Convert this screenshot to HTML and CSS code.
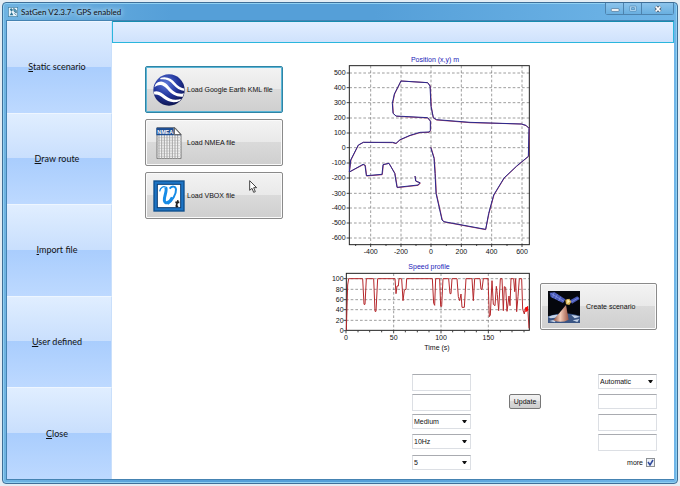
FILE: index.html
```html
<!DOCTYPE html>
<html lang="en">
<head>
<meta charset="utf-8">
<title>SatGen V2.3.7- GPS enabled</title>
<link rel="stylesheet" href="styles.css">
</head>
<body>
<div class="window">
  <header class="titlebar">
    <svg class="app-icon" viewBox="0 0 30 30" aria-hidden="true">
      <rect x="1" y="1" width="28" height="28" fill="#e9f4fb" stroke="#3e7fa3" stroke-width="2"/>
      <path d="M5 6l6-2 4 5-5 5zM11 15l-6 10h11z" fill="#2f7494"/>
      <path d="M17 4l8 6v8l-7-5zM19 19l7 6" fill="#5fa7c4" stroke="#245f80" stroke-width="2"/>
    </svg>
    <h1 class="title">SatGen V2.3.7- GPS enabled</h1>
    <div class="window-controls">
      <button type="button" class="control" aria-label="Minimize"><svg viewBox="0 0 30 30"><rect x="4" y="14" width="23" height="8" rx="2" fill="#fff" stroke="#4b6c8b" stroke-width="2"/></svg></button>
      <button type="button" class="control" aria-label="Maximize"><svg viewBox="0 0 30 30"><rect x="5" y="6" width="20" height="16" rx="2" fill="#b5daf4" stroke="#4d87b3" stroke-width="2"/><rect x="11" y="11" width="8" height="6" fill="#78b8e4" stroke="#4d87b3" stroke-width="2"/></svg></button>
      <button type="button" class="control control-close" aria-label="Close window"><svg viewBox="0 0 30 30"><path d="M8 8l14 14M22 8L8 22" stroke="#46586c" stroke-width="10"/><path d="M8 8l14 14M22 8L8 22" stroke="#fff" stroke-width="5"/></svg></button>
    </div>
  </header>
  <div class="body">
    <nav class="sidebar">
      <button type="button" class="nav-item"><u>S</u>tatic scenario</button>
      <button type="button" class="nav-item"><u>D</u>raw route</button>
      <button type="button" class="nav-item"><u>I</u>mport file</button>
      <button type="button" class="nav-item"><u>U</u>ser defined</button>
      <button type="button" class="nav-item"><u>C</u>lose</button>
    </nav>
    <main class="content">
      <div class="band"></div>
      <div class="workspace">
        <div class="imports">
          <button type="button" class="action action-focused">
            <svg class="action-icon" viewBox="0 0 96 96" aria-hidden="true">
              <defs>
                <radialGradient id="globe" cx="40%" cy="30%" r="75%"><stop offset="0" stop-color="#5d78d8"/><stop offset=".5" stop-color="#2539a0"/><stop offset="1" stop-color="#0a1048"/></radialGradient>
                <clipPath id="disc"><circle cx="48" cy="48" r="46"/></clipPath>
              </defs>
              <circle cx="48" cy="48" r="47" fill="url(#globe)"/>
              <g clip-path="url(#disc)" fill="#fff">
                <path d="M22 12C40 6 56 14 66 26C74 36 84 42 96 44L95 51C80 49 70 42 61 32C50 19 38 14 22 16Z"/>
                <path d="M8 30C24 16 36 24 48 38C60 53 74 62 94 58L90 68C72 70 56 62 43 46C31 32 20 28 4 40Z"/>
                <path d="M0 54C16 48 26 56 38 66C52 77 66 80 86 74L80 81C62 88 44 84 31 73C22 65 14 60 2 62Z"/>
              </g>
            </svg>
            <span>Load Google Earth KML file</span>
          </button>
          <button type="button" class="action">
            <svg class="action-icon" viewBox="0 0 96 96" aria-hidden="true">
              <path d="M12 2H66L84 22V95H12Z" fill="#f3f3f3" stroke="#777" stroke-width="3"/>
              <path d="M14 32H83M14 40H83M14 48H83M14 56H83M14 64H83M14 72H83M14 80H83M14 88H83" stroke="#d2d2d2" stroke-width="3"/>
              <path d="M18 24V95M26 24V95M34 24V95M42 24V95M50 24V95M58 24V95M66 24V95M74 24V95" stroke="#a5a5a5" stroke-width="3"/>
              <path d="M10 2H62V22H84V25H10Z" fill="#1d4d92"/>
              <path d="M64 2L84 23H64Z" fill="#fff" stroke="#555" stroke-width="3"/>
              <text x="13" y="20" class="nmea-mark">NMEA</text>
            </svg>
            <span>Load NMEA file</span>
          </button>
          <button type="button" class="action">
            <svg class="action-icon" viewBox="0 0 96 96" aria-hidden="true">
              <rect x="1" y="1" width="94" height="94" fill="#0d4e8d"/>
              <rect x="5" y="5" width="86" height="86" fill="#1d74c4"/>
              <rect x="13" y="13" width="70" height="70" fill="#fff" stroke="#0c3f75" stroke-width="3"/>
              <path d="M20 34C22 22 32 17 38 22" fill="none" stroke="#168be6" stroke-width="4"/>
              <path d="M38 22C44 32 32 50 34 62C37 74 50 68 58 52" fill="none" stroke="#168be6" stroke-width="9"/>
              <path d="M50 26C56 17 68 18 69 28C70 42 58 62 44 72" fill="none" stroke="#168be6" stroke-width="6"/>
              <path d="M75 61L70 77Q69 82 75 78M67 67H79" fill="none" stroke="#222" stroke-width="5"/>
            </svg>
            <span>Load VBOX file</span>
            <svg class="pointer" viewBox="0 0 24 39" aria-hidden="true"><path d="M2 2V31L9 25L14 37L19 35L14 23H23Z" fill="#fff" stroke="#444" stroke-width="3"/></svg>
          </button>
        </div>
        <svg class="chart" viewBox="0 0 645 630" role="img" aria-label="Position (x,y) m">
          <text x="345" y="36" class="chart-title">Position (x,y) m</text>
          <path class="grid" d="M88 69H629M88 113H629M88 158H629M88 204H629M88 249H629M88 293H629M88 339H629M88 384H629M88 430H629M88 474H629M88 519H629M88 564H629M152 47V583M243 47V583M333 47V583M424 47V583M515 47V583M606 47V583"/>
          <path class="tick" d="M80 69h8M80 113h8M80 158h8M80 204h8M80 249h8M80 293h8M80 339h8M80 384h8M80 430h8M80 474h8M80 519h8M80 564h8M152 583v8M243 583v8M333 583v8M424 583v8M515 583v8M606 583v8M107 583v5M198 583v5M288 583v5M379 583v5M470 583v5M561 583v5"/>
          <rect class="frame" x="88" y="47" width="540" height="537"/>
          <path class="track-shadow" d="M333 292L343 325L346 370L349 430L367 510L373 516L497 539L507 490L522 435L553 384L590 349L626 319L628 235L618 227L604 222L450 218L350 210L340 204L334 170L331 108L323 98L243 93L224 132L218 160L220 190L229 199L323 204L332 214V241L328 247L300 248L270 257L240 270L228 281L218 278L130 277L115 286L93 330L88 366L130 344L136 346L140 378L187 374L190 344L207 340L225 370L232 413L295 406L301 399L288 394L285 378"/>
          <path class="track" d="M332 292L342 325L345 370L348 430L366 510L372 515L497 538L506 490L521 435L552 384L590 348L625 319L627 235L618 226L604 222L450 217L350 209L340 203L333 170L330 108L323 98L243 93L223 132L217 160L219 190L228 198L323 203L331 213V241L327 246L300 247L270 256L240 269L228 280L218 277L130 277L115 285L92 330L88 366L129 343L135 346L139 377L186 373L189 344L207 340L224 370L231 412L294 405L300 398L287 393L285 378"/>
          <g class="ylabel">
            <text x="77" y="76">500</text><text x="77" y="120">400</text><text x="77" y="165">300</text><text x="77" y="211">200</text><text x="77" y="256">100</text><text x="77" y="300">0</text><text x="77" y="346">-100</text><text x="77" y="391">-200</text><text x="77" y="437">-300</text><text x="77" y="481">-400</text><text x="77" y="526">-500</text><text x="77" y="571">-600</text>
          </g>
          <g class="xlabel">
            <text x="152" y="613">-400</text><text x="243" y="613">-200</text><text x="333" y="613">0</text><text x="424" y="613">200</text><text x="515" y="613">400</text><text x="606" y="613">600</text>
          </g>
        </svg>
        <svg class="chart" viewBox="0 0 645 285" role="img" aria-label="Speed profile">
          <text x="327" y="27" class="chart-title">Speed profile</text>
          <path class="grid" d="M78 56H627M78 88H627M78 119H627M78 149H627M78 181H627M221 40V212M363 40V212M505 40V212"/>
          <path class="tick" d="M71 56h7M71 88h7M71 119h7M71 149h7M71 181h7M71 212h7M78 212v8M221 212v8M363 212v8M505 212v8M114 212v5M149 212v5M185 212v5M256 212v5M292 212v5M327 212v5M398 212v5M434 212v5M469 212v5M541 212v5M576 212v5M612 212v5"/>
          <rect class="frame" x="79" y="40" width="549" height="171"/>
          <path class="speed" d="M79 210L83 75L86 56H128L132 133H135L139 56H161L165 154H168L173 56H225L228 101L231 78H235L237 56H245L249 122L253 90L258 88L260 56H337L341 130L344 136L347 56H359L362 139H365L369 56H386L390 101H393L396 56H411L415 110L419 122L423 102L426 142H433L438 56H456L460 122L464 56H480L483 88H486L490 56H504L508 170L511 165L516 62L520 133L525 137L529 79L532 104L536 152L541 56H546L550 152L553 80L557 82L561 154L567 108L570 137L573 56H581L584 95L587 56L590 155L594 110L598 56H605L608 148L613 162L616 144L621 152L623 139L627 205"/>
          <path class="speed-end" d="M618 141V156M622 140V152"/>
          <g class="ylabel">
            <text x="71" y="63">100</text><text x="71" y="95">80</text><text x="71" y="126">60</text><text x="71" y="156">40</text><text x="71" y="188">20</text><text x="71" y="219">0</text>
          </g>
          <g class="xlabel">
            <text x="78" y="241">0</text><text x="221" y="241">50</text><text x="363" y="241">100</text><text x="505" y="241">150</text><text x="351" y="269">Time (s)</text>
          </g>
        </svg>
        <button type="button" class="action create">
          <svg class="action-icon" viewBox="0 0 96 96" aria-hidden="true">
            <defs><linearGradient id="beam"><stop offset="0" stop-color="#8c4c3c"/><stop offset=".45" stop-color="#f3cdb9"/><stop offset="1" stop-color="#9c5544"/></linearGradient></defs>
            <rect width="96" height="96" fill="#05070d"/>
            <path d="M0 76Q48 58 96 74V96H0Z" fill="#3a5584"/>
            <path d="M0 78Q18 70 32 72L22 80L8 82ZM70 72Q84 72 96 77L80 82ZM4 90L28 84L20 94ZM74 88L94 84L88 93Z" fill="#c4d3e8"/>
            <path d="M54 42L16 88Q40 98 62 86Z" fill="url(#beam)"/>
            <path d="M5 5L20 4L52 25L45 36L8 18Z" fill="#4859b8"/>
            <path d="M66 28L88 16L95 24L72 38Z" fill="#4859b8"/>
            <path d="M10 8L48 31M18 5L14 20M28 10L22 24M38 17L32 30M70 33L92 20" stroke="#8b9ae4" stroke-width="2"/>
            <path d="M52 26L64 23L70 32L64 42L54 40Z" fill="#d8b457"/>
            <path d="M58 25L66 31L58 38Z" fill="#fff2b6"/>
          </svg>
          <span>Create scenario</span>
        </button>
      </div>
      <form class="settings">
        <input class="field left tall" type="text" aria-label="Start time">
        <select class="field right" aria-label="Mode"><option>Automatic</option></select>
        <input class="field left tall" type="text" aria-label="Start date">
        <button type="button" class="update">Update</button>
        <input class="field right" type="text" aria-label="Value one">
        <select class="field left" aria-label="Dynamics"><option>Medium</option></select>
        <input class="field right tall" type="text" aria-label="Value two">
        <select class="field left" aria-label="Rate"><option>10Hz</option></select>
        <input class="field right tall" type="text" aria-label="Value three">
        <select class="field left last" aria-label="Count"><option>5</option></select>
        <label class="more right last">more <input type="checkbox" class="tick-box" checked></label>
      </form>
    </main>
  </div>
</div>
</body>
</html>
```
FILE: styles.css
```css
* { box-sizing: border-box; }

body {
  margin: 0;
  padding: 2px;
  background: #e4edf4;
  color: #111;
  font-family: "Liberation Sans", sans-serif;
  font-size: 7px;
  line-height: 10px;
}

button, input, select { font: inherit; color: inherit; margin: 0; }

.window {
  display: flex;
  flex-direction: column;
  min-height: calc(100vh - 4px);
  padding: 0 3px 3px;
  border: 1px solid #3f6f98;
  border-radius: 4px;
  background: linear-gradient(90deg, #6fb3e2, #559fd8 25%, #559fd8 55%, #70b6e8);
  box-shadow: inset 0 0 0 1px #8fd0f2;
}

.titlebar {
  display: flex;
  align-items: center;
  height: 17px;
}

.app-icon { width: 10px; height: 10px; margin-left: 2px; }

.title {
  flex: 1;
  margin: 0 0 0 3px;
  font-family: Lato, sans-serif;
  font-size: 8px;
  font-weight: 400;
  line-height: 10px;
  text-shadow: 0 0 4px #cfe8f8, 0 0 6px #cfe8f8;
}

.window-controls {
  display: flex;
  align-self: flex-start;
  height: 12px;
  border: 1px solid #4d83ae;
  border-top: 0;
  border-radius: 0 0 3px 3px;
}

.control {
  display: flex;
  align-items: center;
  justify-content: center;
  width: 18px;
  padding: 0;
  border: 0;
  border-right: 1px solid #4d83ae;
  background: linear-gradient(#8cc4ec, #69afe0);
}

.control svg { width: 10px; height: 10px; }
.control-close { width: 31px; border-right: 0; }

.body {
  display: flex;
  flex: 1;
  border: 1px solid #4583b2;
  border-right: 0;
}

.sidebar { display: flex; flex-direction: column; flex: none; width: 105px; }

.nav-item {
  flex: 1;
  padding: 0 4px 0 0;
  border: 0;
  border-top: 1px solid #eef6ff;
  border-right: 1px solid #c9dffb;
  background: linear-gradient(#e0eeff, #c9dffd 49%, #a9cdfd 49%, #bdd9ff);
  font-family: Lato, sans-serif;
  font-size: 9px;
}

.content { display: flex; flex-direction: column; flex: 1; background: #fff; }

.band {
  height: 22px;
  border: 1px solid #2ab6dd;
  border-top-color: #168caf;
  background: linear-gradient(#e2eeff, #cfe2fc);
}

.workspace {
  display: grid;
  grid-template-columns: 170px minmax(0, 1fr) 117px;
  column-gap: 5px;
  padding: 7px 17px 0 33px;
}

.imports {
  display: flex;
  flex-direction: column;
  gap: 6px;
  width: 138px;
  padding-top: 16px;
}

.chart { display: block; grid-column: 2; width: 100%; height: auto; }

.action {
  position: relative;
  display: flex;
  align-items: center;
  gap: 2px;
  height: 47px;
  padding: 0 7px;
  border: 1px solid #8a8a8a;
  border-radius: 2px;
  background: linear-gradient(#f3f3f3, #e9e9e9 49%, #dadada 49%, #cfcfcf);
  box-shadow: inset 0 0 0 1px #fafafa;
  white-space: nowrap;
}

.action-focused { border-color: #2e84a5; box-shadow: inset 0 0 0 1px #5bb5d6; }
.action-icon { flex: none; width: 32px; height: 32px; }
.create { grid-column: 3; grid-row: 2; gap: 6px; margin-top: 23px; }

.pointer { position: absolute; top: 7px; left: 103px; width: 8px; height: 13px; }

.nmea-mark { font: 700 16px "Liberation Sans", sans-serif; fill: #fff; }

.chart text { font-family: "Liberation Sans", sans-serif; font-size: 21px; fill: #111; }
.chart .chart-title { fill: #1a1ab8; text-anchor: middle; }
.ylabel { text-anchor: end; }
.xlabel { text-anchor: middle; }
.grid { fill: none; stroke: #6e6e6e; stroke-width: 2; stroke-dasharray: 8 6; }
.frame { fill: none; stroke: #222; stroke-width: 3; }
.tick { stroke: #444; stroke-width: 3; }
.track-shadow { fill: none; stroke: #b04060; stroke-width: 3; }
.track { fill: none; stroke: #2a2a8e; stroke-width: 3; stroke-linejoin: round; }
.speed { fill: none; stroke: #b5282c; stroke-width: 3; stroke-linejoin: round; }
.speed-end { stroke: #f00; stroke-width: 4; }

.settings {
  display: grid;
  grid-template-columns: 59px 1fr 59px;
  grid-auto-rows: 17px;
  row-gap: 3px;
  align-items: start;
  width: 245px;
  margin: 19px 17px 8px auto;
}

.left { grid-column: 1; }
.right { grid-column: 3; }
.last { align-self: center; }

.field {
  width: 100%;
  height: 15px;
  padding: 0 2px;
  border: 1px solid #dcdfe4;
  border-top-color: #a9abb0;
  border-radius: 0;
  background: #fff;
}

.tall { height: 17px; }

select.field {
  appearance: none;
  padding: 0 1px;
  background: url("data:image/svg+xml,%3Csvg xmlns='http://www.w3.org/2000/svg' viewBox='0 0 5 3'%3E%3Cpath d='M0 0h5L3 3H2z' fill='%23111'/%3E%3C/svg%3E") no-repeat right 3px center / 5px 3px #fff;
}

.update {
  grid-column: 2;
  justify-self: start;
  width: 32px;
  height: 15px;
  margin-left: 38px;
  padding: 0;
  border: 1px solid #777;
  border-radius: 2px;
  background: linear-gradient(#f2f2f2, #e8e8e8 50%, #d9d9d9 50%, #cecece);
}

.more { display: flex; align-items: center; justify-content: flex-end; gap: 3px; padding-right: 2px; }

.tick-box {
  appearance: none;
  width: 9px;
  height: 9px;
  border: 1px solid #8b8f94;
  background: url("data:image/svg+xml,%3Csvg xmlns='http://www.w3.org/2000/svg' viewBox='0 0 7 7'%3E%3Cpath d='M1 3l2 3L6 1' fill='none' stroke='%23304a9c' stroke-width='1.5'/%3E%3C/svg%3E") center / 7px 7px no-repeat #edf1f7;
}
```
